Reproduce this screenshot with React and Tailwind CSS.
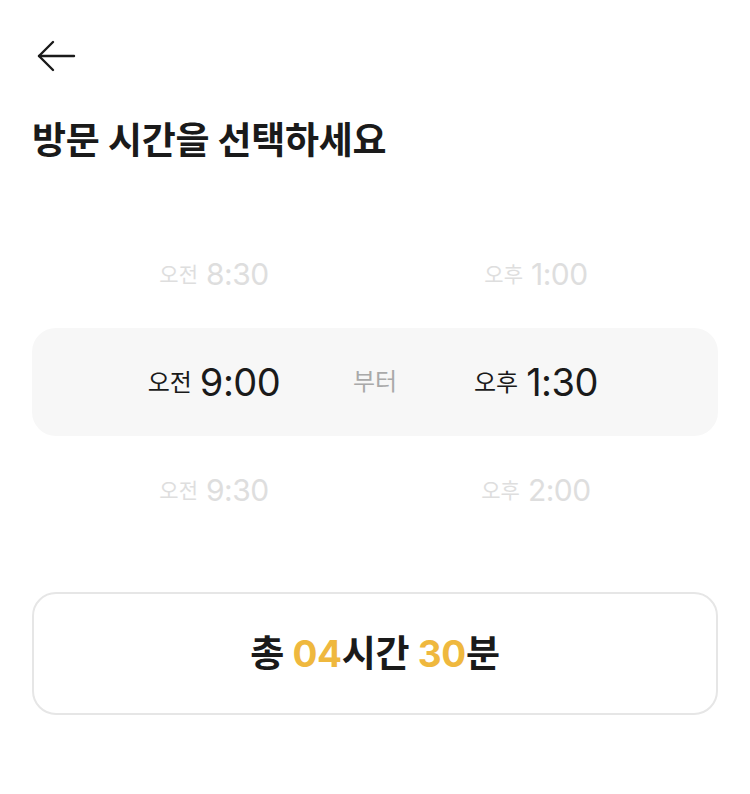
import React from 'react';

const KR = { fontFamily: 'Inter, "Noto Sans CJK KR", sans-serif' };

const rows = [
  { left: ['오전', '8:30'], right: ['오후', '1:00'] },
  { left: ['오전', '9:00'], right: ['오후', '1:30'], active: true },
  { left: ['오전', '9:30'], right: ['오후', '2:00'] },
];

const TimeLabel = ({ period, time, active }) => (
  <div className="flex items-center justify-center gap-[8px]">
    <span className={active ? 'text-[24px] text-[#1a1a1a] translate-y-[1px]' : 'text-[21px] text-[#dedede] translate-y-[1px]'}>{period}</span>
    <span className={active ? 'text-[38px] text-[#1a1a1a] tracking-[-0.5px]' : 'text-[30px] text-[#dedede] tracking-[-0.5px]'}>{time}</span>
  </div>
);

export default function App() {
  return (
    <div className="w-[750px] h-[794px] bg-white px-8" style={KR}>
      {/* back button */}
      <div className="pt-[40px] pl-[4px]">
        <svg width="40" height="32" viewBox="0 0 40 32" fill="none" stroke="#1a1a1a" strokeWidth="2.4" strokeLinecap="round" strokeLinejoin="round">
          <path d="M38 16H3" />
          <path d="M17 2L3 16l14 14" />
        </svg>
      </div>

      <h1 className="mt-[45px] text-[37px] font-bold text-[#1a1a1a] tracking-[-0.3px] leading-[48px]">방문 시간을 선택하세요</h1>

      {/* picker */}
      <div className="mt-[55px] flex flex-col">
        {rows.map((row, i) => (
          <div
            key={i}
            className={`h-[108px] flex items-center justify-center ${row.active ? 'bg-[#f7f7f7] rounded-[24px]' : ''}`}
          >
            <div className="w-[200px]">
              <TimeLabel period={row.left[0]} time={row.left[1]} active={row.active} />
            </div>
            <div className={`w-[122px] text-center text-[24px] ${row.active ? 'text-[#a9a9a9]' : 'text-transparent'}`}>부터</div>
            <div className="w-[200px]">
              <TimeLabel period={row.right[0]} time={row.right[1]} active={row.active} />
            </div>
          </div>
        ))}
      </div>

      {/* total */}
      <div className="mt-[48px] h-[123px] border-2 border-[#e6e6e6] rounded-[24px] flex items-center justify-center">
        <p className="text-[37px] font-bold text-[#1a1a1a] tracking-[-0.3px]">
          총 <span className="text-[#efb83e]">04</span>시간 <span className="text-[#efb83e]">30</span>분
        </p>
      </div>
    </div>
  );
}
